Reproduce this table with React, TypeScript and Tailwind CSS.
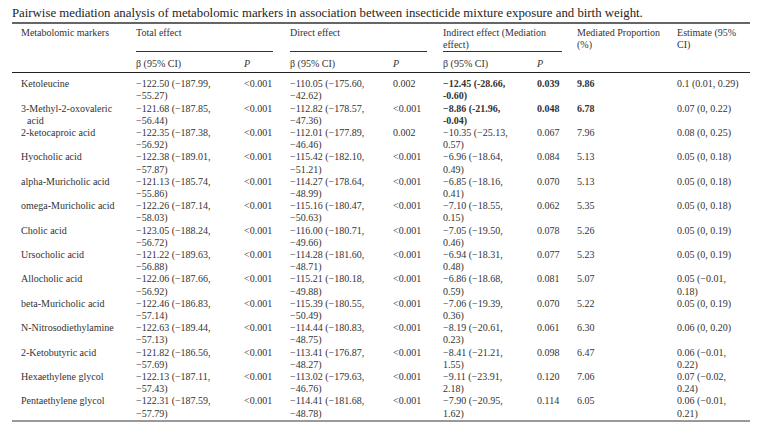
import React from 'react';

type Row = {
  name: React.ReactNode;
  total: [string, string];
  totalP: string;
  direct: [string, string];
  directP: string;
  indirect: [string, string];
  indirectP: string;
  prop: string;
  est: [string, string?];
  bold?: boolean;
};

const rows: Row[] = [
  { name: 'Ketoleucine', total: ['−122.50 (−187.99,', '−55.27)'], totalP: '<0.001', direct: ['−110.05 (−175.60,', '−42.62)'], directP: '0.002', indirect: ['−12.45 (-28.66,', '-0.60)'], indirectP: '0.039', prop: '9.86', est: ['0.1 (0.01, 0.29)'], bold: true },
  { name: (<>3-Methyl-2-oxovaleric<br /><span className="pl-[6px]">acid</span></>), total: ['−121.68 (−187.85,', '−56.44)'], totalP: '<0.001', direct: ['−112.82 (−178.57,', '−47.36)'], directP: '<0.001', indirect: ['−8.86 (-21.96,', '-0.04)'], indirectP: '0.048', prop: '6.78', est: ['0.07 (0, 0.22)'], bold: true },
  { name: '2-ketocaproic acid', total: ['−122.35 (−187.38,', '−56.92)'], totalP: '<0.001', direct: ['−112.01 (−177.89,', '−46.46)'], directP: '0.002', indirect: ['−10.35 (−25.13,', '0.57)'], indirectP: '0.067', prop: '7.96', est: ['0.08 (0, 0.25)'] },
  { name: 'Hyocholic acid', total: ['−122.38 (−189.01,', '−57.87)'], totalP: '<0.001', direct: ['−115.42 (−182.10,', '−51.21)'], directP: '<0.001', indirect: ['−6.96 (−18.64,', '0.49)'], indirectP: '0.084', prop: '5.13', est: ['0.05 (0, 0.18)'] },
  { name: 'alpha-Muricholic acid', total: ['−121.13 (−185.74,', '−55.86)'], totalP: '<0.001', direct: ['−114.27 (−178.64,', '−48.99)'], directP: '<0.001', indirect: ['−6.85 (−18.16,', '0.41)'], indirectP: '0.070', prop: '5.13', est: ['0.05 (0, 0.18)'] },
  { name: 'omega-Muricholic acid', total: ['−122.26 (−187.14,', '−58.03)'], totalP: '<0.001', direct: ['−115.16 (−180.47,', '−50.63)'], directP: '<0.001', indirect: ['−7.10 (−18.55,', '0.15)'], indirectP: '0.062', prop: '5.35', est: ['0.05 (0, 0.18)'] },
  { name: 'Cholic acid', total: ['−123.05 (−188.24,', '−56.72)'], totalP: '<0.001', direct: ['−116.00 (−180.71,', '−49.66)'], directP: '<0.001', indirect: ['−7.05 (−19.50,', '0.46)'], indirectP: '0.078', prop: '5.26', est: ['0.05 (0, 0.19)'] },
  { name: 'Ursocholic acid', total: ['−121.22 (−189.63,', '−56.88)'], totalP: '<0.001', direct: ['−114.28 (−181.60,', '−48.71)'], directP: '<0.001', indirect: ['−6.94 (−18.31,', '0.48)'], indirectP: '0.077', prop: '5.23', est: ['0.05 (0, 0.19)'] },
  { name: 'Allocholic acid', total: ['−122.06 (−187.66,', '−56.92)'], totalP: '<0.001', direct: ['−115.21 (−180.18,', '−49.88)'], directP: '<0.001', indirect: ['−6.86 (−18.68,', '0.59)'], indirectP: '0.081', prop: '5.07', est: ['0.05 (−0.01,', '0.18)'] },
  { name: 'beta-Muricholic acid', total: ['−122.46 (−186.83,', '−57.14)'], totalP: '<0.001', direct: ['−115.39 (−180.55,', '−50.49)'], directP: '<0.001', indirect: ['−7.06 (−19.39,', '0.36)'], indirectP: '0.070', prop: '5.22', est: ['0.05 (0, 0.19)'] },
  { name: 'N-Nitrosodiethylamine', total: ['−122.63 (−189.44,', '−57.13)'], totalP: '<0.001', direct: ['−114.44 (−180.83,', '−48.75)'], directP: '<0.001', indirect: ['−8.19 (−20.61,', '0.23)'], indirectP: '0.061', prop: '6.30', est: ['0.06 (0, 0.20)'] },
  { name: '2-Ketobutyric acid', total: ['−121.82 (−186.56,', '−57.69)'], totalP: '<0.001', direct: ['−113.41 (−176.87,', '−48.27)'], directP: '<0.001', indirect: ['−8.41 (−21.21,', '1.55)'], indirectP: '0.098', prop: '6.47', est: ['0.06 (−0.01,', '0.22)'] },
  { name: 'Hexaethylene glycol', total: ['−122.13 (−187.11,', '−57.43)'], totalP: '<0.001', direct: ['−113.02 (−179.63,', '−46.76)'], directP: '<0.001', indirect: ['−9.11 (−23.91,', '2.18)'], indirectP: '0.120', prop: '7.06', est: ['0.07 (−0.02,', '0.24)'] },
  { name: 'Pentaethylene glycol', total: ['−122.31 (−187.59,', '−57.79)'], totalP: '<0.001', direct: ['−114.41 (−181.68,', '−48.78)'], directP: '<0.001', indirect: ['−7.90 (−20.95,', '1.62)'], indirectP: '0.114', prop: '6.05', est: ['0.06 (−0.01,', '0.21)'] },
];

function Two({ lines }: { lines: (string | undefined)[] }) {
  return (
    <>
      {lines[0]}
      {lines[1] && (
        <>
          <br />
          {lines[1]}
        </>
      )}
    </>
  );
}

export default function App() {
  return (
    <div className="w-[761px] h-[431px] bg-white text-[#333] font-['Liberation_Serif',serif] pt-[6px] pl-[12px]">
      <div className="text-[12.8px] leading-[14px] text-[#1e1e1e] mb-[2px]">
        Pairwise mediation analysis of metabolomic markers in association between insecticide mixture exposure and birth weight.
      </div>
      <table className="table-fixed border-collapse w-[738px] text-[10px] leading-[12.2px] border-t-2 border-t-[#666] border-b-2 border-b-[#999]">
        <colgroup>
          <col className="w-[124px]" />
          <col className="w-[108px]" />
          <col className="w-[46px]" />
          <col className="w-[103px]" />
          <col className="w-[50px]" />
          <col className="w-[94px]" />
          <col className="w-[40px]" />
          <col className="w-[100px]" />
          <col className="w-[73px]" />
        </colgroup>
        <thead>
          <tr className="align-top text-left">
            <th rowSpan={2} className="font-normal pl-[9px] pt-[3px]">Metabolomic markers</th>
            <th colSpan={2} className="font-normal p-0 pt-[3px]">
              <div className="h-[24px]">Total effect</div>
              <div className="border-b border-[#333] mr-[17px] mb-[1px]" />
            </th>
            <th colSpan={2} className="font-normal p-0 pt-[3px]">
              <div className="h-[24px]">Direct effect</div>
              <div className="border-b border-[#333] mr-[16px] mb-[1px]" />
            </th>
            <th colSpan={2} className="font-normal p-0 pt-[3px]">
              <div className="h-[24px]">Indirect effect (Mediation<br />effect)</div>
              <div className="border-b border-[#333] mr-[15px] mb-[1px]" />
            </th>
            <th rowSpan={2} className="font-normal p-0 pt-[3px]">Mediated Proportion<br />(%)</th>
            <th rowSpan={2} className="font-normal p-0 pt-[3px]">Estimate (95%<br />CI)</th>
          </tr>
          <tr className="text-left border-b border-[#222]">
            <th className="font-normal p-0 pt-[5px] pb-[2px]">β (95% CI)</th>
            <th className="font-normal italic p-0 pt-[5px] pb-[2px]">P</th>
            <th className="font-normal p-0 pt-[5px] pb-[2px]">β (95% CI)</th>
            <th className="font-normal italic p-0 pt-[5px] pb-[2px]">P</th>
            <th className="font-normal p-0 pt-[5px] pb-[2px]">β (95% CI)</th>
            <th className="font-normal italic p-0 pt-[5px] pb-[2px]">P</th>
          </tr>
        </thead>
        <tbody>
          {rows.map((r, i) => (
            <tr key={i} className="align-top whitespace-nowrap">
              <td className={`pl-[9px] ${i === 0 ? 'pt-[5px]' : ''}`}>{r.name}</td>
              <td className={i === 0 ? 'pt-[5px]' : ''}><Two lines={r.total} /></td>
              <td className={i === 0 ? 'pt-[5px]' : ''}>{r.totalP}</td>
              <td className={i === 0 ? 'pt-[5px]' : ''}><Two lines={r.direct} /></td>
              <td className={`text-right pr-[28px] ${i === 0 ? 'pt-[5px]' : ''}`}>{r.directP}</td>
              <td className={`${r.bold ? 'font-bold' : ''} ${i === 0 ? 'pt-[5px]' : ''}`}><Two lines={r.indirect} /></td>
              <td className={`${r.bold ? 'font-bold' : ''} ${i === 0 ? 'pt-[5px]' : ''}`}>{r.indirectP}</td>
              <td className={`${r.bold ? 'font-bold' : ''} ${i === 0 ? 'pt-[5px]' : ''}`}>{r.prop}</td>
              <td className={i === 0 ? 'pt-[5px]' : ''}><Two lines={[r.est[0], r.est[1]]} /></td>
            </tr>
          ))}
        </tbody>
      </table>
    </div>
  );
}
